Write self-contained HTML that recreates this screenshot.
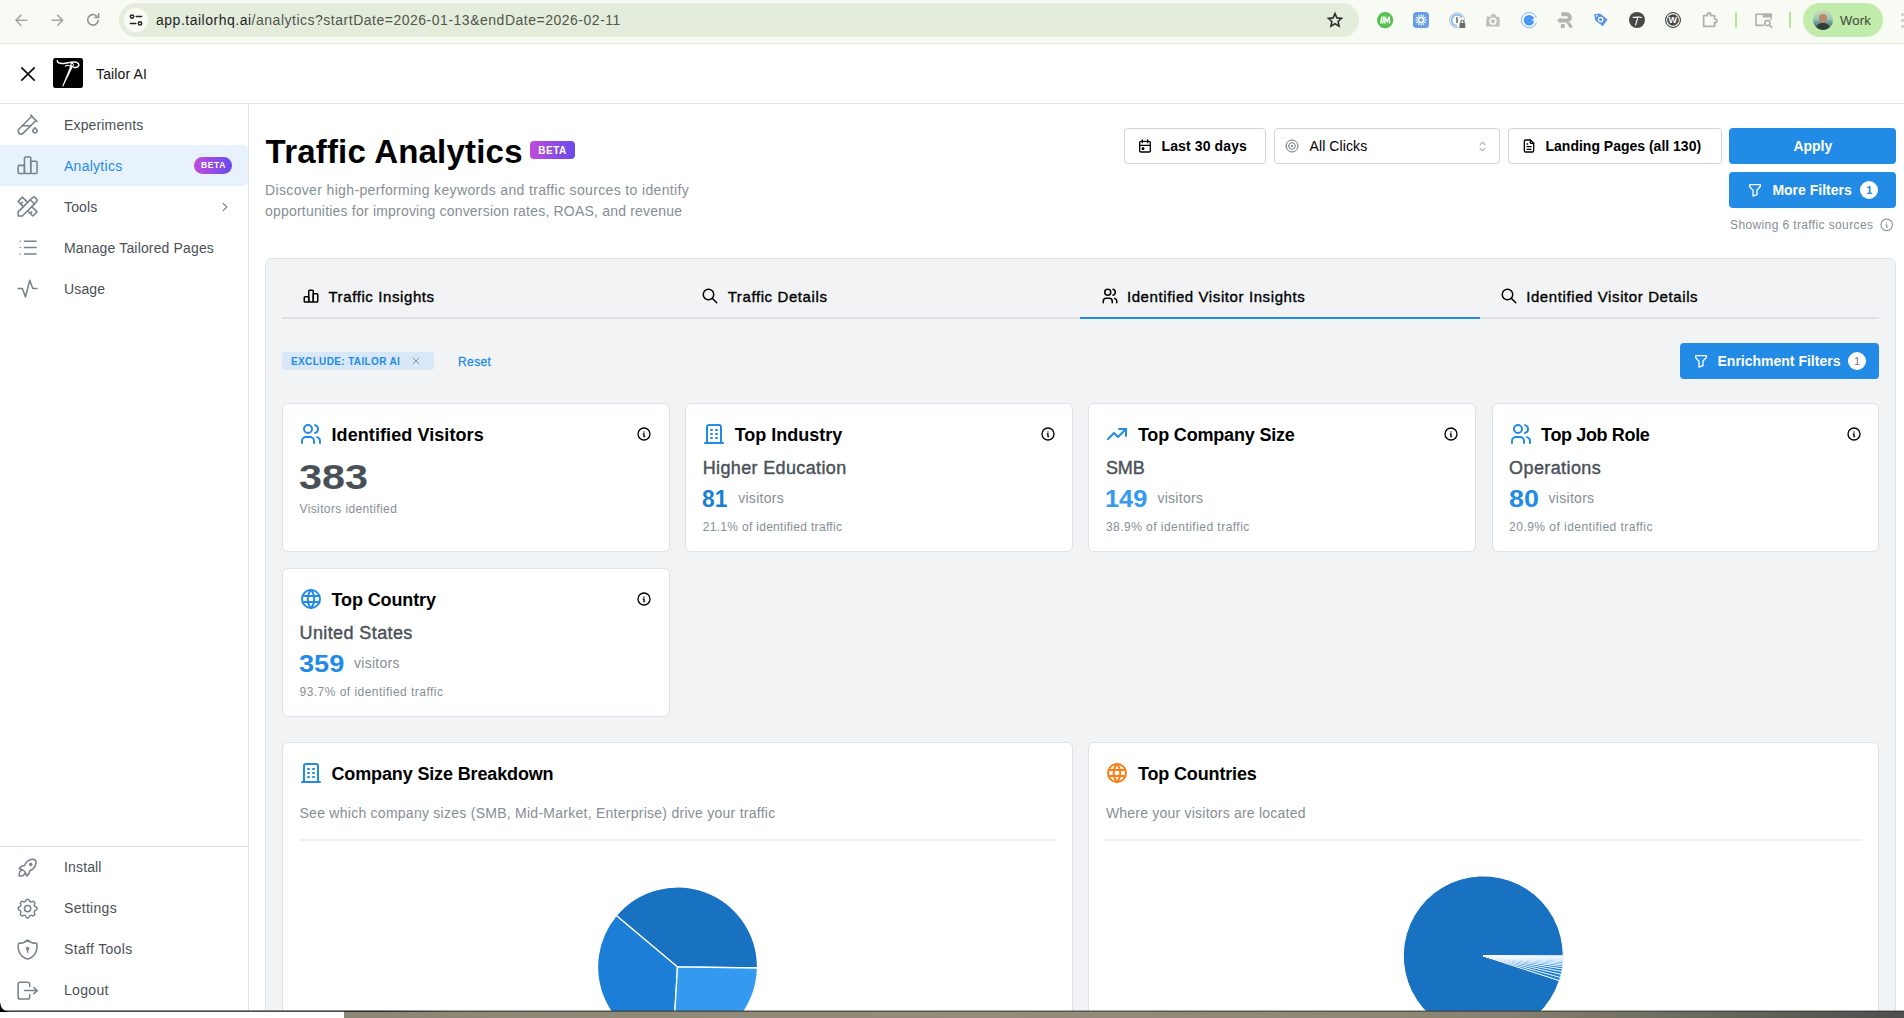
<!DOCTYPE html>
<html lang="en">
<head>
<meta charset="utf-8">
<title>Tailor AI - Traffic Analytics</title>
<style>
*{box-sizing:border-box;margin:0;padding:0}
html,body{width:1904px;height:1018px;overflow:hidden;background:#fff}
body{font-family:"Liberation Sans",sans-serif;color:#000;position:relative;-webkit-font-smoothing:antialiased}
.abs{position:absolute}
svg{display:block;overflow:visible}
.ic{fill:none;stroke:currentColor;stroke-linecap:round;stroke-linejoin:round}
.t{position:absolute;white-space:nowrap;line-height:1}
.med{-webkit-text-stroke:0.3px currentColor}

/* ---------- browser chrome ---------- */
#chrome{left:0;top:0;width:1904px;height:43px;background:#f8fbf3}
#chromeline{left:0;top:43px;width:1904px;height:1px;background:#e2e7db}
#urlbar{left:119px;top:3px;width:1240px;height:34px;border-radius:17px;background:#e4ecdc}
#siteinfo{left:124px;top:8px;width:24px;height:24px;border-radius:12px;background:#f8fbf3}
#url{left:156px;top:13px;font-size:14px;color:#1f241c;letter-spacing:0.51px}
#url span{color:#4f564a}
#profile{left:1803px;top:3px;width:80px;height:34px;border-radius:17px;background:#c1ecab}
#avatar{left:1813px;top:10px;width:20px;height:20px;border-radius:10px;overflow:hidden;background:linear-gradient(180deg,#c9d9b0 0%,#9fc9b8 45%,#6fa3a0 60%,#3f5a4c 100%)}
#work{left:1840px;top:13.5px;font-size:13px;color:#47523f;letter-spacing:0.2px;-webkit-text-stroke:0.15px #47523f}
.sep{width:2px;height:16px;top:12px;background:#b5e39d;border-radius:1px}

/* ---------- app header ---------- */
#apphead{left:0;top:44px;width:1904px;height:59px;background:#fff}
#appheadline{left:0;top:103px;width:1904px;height:1px;background:#dee2e6}
#logo{left:53px;top:58.3px;width:29.9px;height:30px;border-radius:2.5px;background:#000}
#brand{left:96px;top:67px;font-size:14px;color:#111;letter-spacing:0.13px}

/* ---------- sidebar ---------- */
#sidebar{left:0;top:104px;width:248px;height:907px;background:#fff}
#sideline{left:248px;top:104px;width:1px;height:907px;background:#dee2e6}
.nav{position:absolute;left:0;width:248px;height:41px;color:#495057}
.nav svg{position:absolute;left:14.8px;top:8.1px;width:25.2px;height:25.2px;color:#77818c}
.nav .lbl{position:absolute;left:64px;top:13.5px;font-size:14px;line-height:1;white-space:nowrap;letter-spacing:0.15px}
.nav.active{background:#e7f2fd;border-radius:0 5px 5px 0;color:#228be6;height:41px}
#navdiv{left:0;top:846px;width:248px;height:1px;background:#dee2e6}
.beta{background:linear-gradient(90deg,#c04bd9 0%,#6a4cec 100%);color:#fff;font-weight:700;text-align:center;white-space:nowrap}

/* ---------- main ---------- */
#title{left:265.6px;top:134.5px;font-size:33px;font-weight:700;color:#000;letter-spacing:0.2px}
.desc{left:265px;font-size:14px;color:#868e96}
.btn{position:absolute;height:36px;border-radius:4px}
.btn.out{background:#fff;border:1px solid #ced4da}
.btn.fill{background:#228be6}
.btn .t{top:11px;font-size:14px;font-weight:700}
.btn.out .t{top:10px}
.cnt{position:absolute;width:18px;height:18px;border-radius:9px;background:#fff;font-size:11px;font-weight:700;text-align:center;line-height:18px}
#panel{left:265px;top:258px;width:1631px;height:800px;background:#f1f3f5;border:1px solid #dee2e6;border-radius:7px}
#tabline{left:282px;top:317px;width:1597px;height:2px;background:#dee2e6}
#tabact{left:1080px;top:317px;width:400px;height:2px;background:#228be6}
.tab{top:288.6px;font-size:15px;color:#000;letter-spacing:0.6px;-webkit-text-stroke:0.35px #000}
.tabic{position:absolute;top:286.9px;width:18px;height:18px;color:#000}
#chip{left:282px;top:352px;width:152px;height:18px;border-radius:3px;background:#d8e8f8}
#chiptxt{left:291px;top:356.8px;font-size:10px;font-weight:700;color:#228be6;letter-spacing:0.36px}
#reset{left:458px;top:355.7px;font-size:12px;color:#228be6;-webkit-text-stroke:0.3px #228be6;letter-spacing:0.4px}
.card{position:absolute;background:#fff;border:1px solid #dee2e6;border-radius:6px}
.stat{width:387.5px;height:149px}
.stat .hic{position:absolute;left:16px;top:18px;width:24px;height:24px;color:#228be6}
.stat .h{left:48.5px;top:22px;font-size:18px;font-weight:700;color:#000}
.stat .info{position:absolute;left:353.4px;top:22.3px;width:16px;height:16px;color:#000}
.stat .sub{left:16.5px;top:55.4px;font-size:18px;color:#495057;-webkit-text-stroke:0.4px #495057;letter-spacing:0.4px}
.stat .num{left:16px;top:83.4px;font-size:24px;font-weight:700;color:#228be6;transform-origin:0 0}
.stat .vis{top:87.2px;font-size:14px;color:#868e96;letter-spacing:0.28px}
.stat .pct{left:16.5px;top:117px;font-size:12px;color:#868e96;letter-spacing:0.47px}
.chart{width:790.7px;height:300px;top:742px}
.chart .hic{position:absolute;left:16px;top:18px;width:24px;height:24px}
.chart .h{left:48.5px;top:21.5px;font-size:18px;font-weight:700;color:#000;letter-spacing:-0.14px}
.chart .sub{left:16.5px;top:63px;font-size:14px;color:#868e96;letter-spacing:0.26px}
.chart .div{position:absolute;left:16px;right:16px;top:96px;height:2px;background:#eceef1}
</style>
</head>
<body>

<!-- ================= BROWSER CHROME ================= -->
<div id="chrome" class="abs"></div>
<div id="chromeline" class="abs"></div>

<!-- nav arrows -->
<svg class="abs ic" style="left:14.7px;top:13.7px;width:12.6px;height:12.6px;color:#a3a7a0;stroke-width:1.7" viewBox="0 0 14 14"><path d="M13 7H1.5M6.5 1.5L1 7l5.5 5.5"/></svg>
<svg class="abs ic" style="left:50.7px;top:13.7px;width:12.6px;height:12.6px;color:#a3a7a0;stroke-width:1.7" viewBox="0 0 14 14"><path d="M1 7h11.5M7.5 1.5L13 7l-5.5 5.5"/></svg>
<svg class="abs ic" style="left:86px;top:13px;width:14px;height:14px;color:#8f948c;stroke-width:1.6" viewBox="0 0 14 14"><path d="M12.2 7.6A5.3 5.3 0 1 1 10.6 3"/><path d="M12.6 0.8v3.6H9" /></svg>
<div id="urlbar" class="abs"></div>
<div id="siteinfo" class="abs"></div>
<svg class="abs ic" style="left:129px;top:13px;width:14px;height:14px;color:#1f241c;stroke-width:1.5" viewBox="0 0 14 14"><circle cx="3" cy="3.6" r="1.7"/><path d="M7.2 3.6H12.6"/><circle cx="11" cy="10.4" r="1.7"/><path d="M1.4 10.4H6.8"/></svg>
<div id="url" class="t">app.tailorhq.ai<span>/analytics?startDate=2026-01-13&amp;endDate=2026-02-11</span></div>
<!-- star -->
<svg class="abs ic" style="left:1327px;top:12px;width:16px;height:16px;color:#2d3229;stroke-width:1.6;stroke-linejoin:miter" viewBox="0 0 16 16"><path d="M8 1.6l1.9 4.3 4.7.5-3.5 3.1 1 4.6L8 11.7l-4.1 2.4 1-4.6L1.4 6.4l4.7-.5z"/></svg>
<!-- extension icons -->
<svg class="abs" style="left:1376.8px;top:11.8px;width:16.3px;height:16.3px" viewBox="0 0 16.3 16.3"><circle cx="8.15" cy="8.15" r="8.15" fill="#55c150"/><path d="M3 11.600L4.200 4.400h1.100l-.7 7.200zM5 11.600l.9-7.200H7l-.4 7.200zM7 11.600l.4-7.200h1.500l1.200 3.800 1.200-3.800h1.500l.5 7.200h-1.500l-.2-4.200-1 3.200h-1l-.9-3.200-.2 4.200z" fill="#fff"/></svg>
<div class="abs" style="left:1413px;top:11.8px;width:16px;height:16.2px;border-radius:3.5px;background:#699ee6"></div>
<svg class="abs ic" style="left:1415px;top:13.9px;width:12px;height:12px;color:#fff;stroke-width:1.1;stroke-linecap:butt" viewBox="0 0 12 12"><circle cx="6" cy="6" r="2.5" stroke-width="1.5"/><path d="M9.60 6.00L11.60 6.00"/><path d="M9.12 7.80L10.85 8.80"/><path d="M7.80 9.12L8.80 10.85"/><path d="M6.00 9.60L6.00 11.60"/><path d="M4.20 9.12L3.20 10.85"/><path d="M2.88 7.80L1.15 8.80"/><path d="M2.40 6.00L0.40 6.00"/><path d="M2.88 4.20L1.15 3.20"/><path d="M4.20 2.88L3.20 1.15"/><path d="M6.00 2.40L6.00 0.40"/><path d="M7.80 2.88L8.80 1.15"/><path d="M9.12 4.20L10.85 3.20"/></svg>
<svg class="abs" style="left:1449px;top:11.5px;width:18px;height:18px" viewBox="0 0 18 18"><circle cx="8" cy="8.3" r="7.6" fill="#f8fbf3" stroke="#a9aca8" stroke-width=".7"/><path d="M12.9 5.500A5.600 5.600 0 1 0 8 13.900" fill="none" stroke="#7cbcfb" stroke-width="1.700"/><rect x="7.2" y="5.2" width="1.5" height="5.800" fill="#666"/><rect x="10.500" y="11" width="5.800" height="5" rx=".8" fill="#6b6b6b"/><path d="M11.900 11V9.800a1.500 1.500 0 0 1 3 0V11" fill="none" stroke="#6b6b6b" stroke-width="1.100"/></svg>
<svg class="abs" style="left:1486px;top:13.8px;width:14px;height:13px" viewBox="0 0 14 13"><path d="M.6 3.300L2.200 1.500v1.300h2.600L5.300.3h4.200l.5 2.500h3a.6.600 0 0 1 .6.600v8.600a.6.600 0 0 1-.6.600H.6a.6.600 0 0 1-.6-.6z" fill="#bdbfbb"/><circle cx="7" cy="7.200" r="3.700" fill="#f8fbf3"/><circle cx="7" cy="7.200" r="2" fill="#bdbfbb"/></svg>
<svg class="abs" style="left:1521px;top:11.800px;width:16.400px;height:16.400px" viewBox="0 0 16.4 16.4"><path d="M15.300 5.800A7.600 7.600 0 1 0 15.300 10.600" fill="none" stroke="#5a9bff" stroke-width=".8"/><circle cx="8.100" cy="8.200" r="5.300" fill="#4a8df5"/><path d="M10.300 7.400A2.400 2.400 0 1 0 10.300 9" fill="none" stroke="#3fd0f5" stroke-width=".7"/><path d="M10.300 7.500L14 6.600v3.200L10.300 8.900z" fill="#f8fbf3"/><path d="M10.300 7.500L13.600 8.200 10.300 8.900z" fill="#4a8df5"/></svg>
<svg class="abs" style="left:1557.2px;top:11.900px;width:16px;height:16px" viewBox="0 0 16 16"><path d="M4.400 2.300h5.400a3.100 3.100 0 0 1 0 6.200H2.800" fill="none" stroke="#b4b5b1" stroke-width="4"/><path d="M0 8.600l3.400-3.200v6z" fill="#b4b5b1"/><rect x="3.800" y="12" width="4" height="4" fill="#b4b5b1"/><path d="M9.200 10.400h3.800l2.800 4.800-3 .8z" fill="#b4b5b1"/></svg>
<svg class="abs" style="left:1593px;top:12px;width:16px;height:16px" viewBox="0 0 16 16"><path d="M1 2.2L7 1.4l7.6 6.2-4.8 6.6L2.4 8.4z" fill="#5b94e6"/><circle cx="7.6" cy="7.6" r="2.2" fill="none" stroke="#fff" stroke-width="1.2"/><circle cx="3.6" cy="3.8" r=".9" fill="#fff"/></svg>
<div class="abs" style="left:1629px;top:12px;width:16px;height:16px;border-radius:8px;background:#484848"></div>
<svg class="abs ic" style="left:1631px;top:14px;width:12px;height:12px;color:#fff;stroke-width:1.1" viewBox="0 0 12 12"><path d="M2 3.2c3 .9 6-1.2 8.4.2M7 2.8L4.6 11"/></svg>
<div class="abs" style="left:1665px;top:12px;width:16px;height:16px;border-radius:8px;background:#4a4a4a;border:1.5px solid #4a4a4a;box-shadow:inset 0 0 0 1.2px #f8fbf3"></div>
<div class="t" style="left:1668.5px;top:16px;font-size:9px;font-weight:700;color:#fff">W</div>
<svg class="abs ic" style="left:1701px;top:11px;width:17px;height:17px;color:#b0b3ad;stroke-width:1.8" viewBox="0 0 17 17"><path d="M2.600 4.600h3.800V3.700a1.700 1.700 0 0 1 3.400 0v.9h3.800v3.500h.7a1.700 1.700 0 0 1 0 3.400h-.7v3.900h-11z"/></svg>
<div class="abs sep" style="left:1735px"></div>
<svg class="abs ic" style="left:1755px;top:13px;width:18px;height:15px;color:#b0b3ad;stroke-width:1.6" viewBox="0 0 18 15"><path d="M8.5 12.4H1V1.2h15v5"/><path d="M8.5 1.2h7.5v2.6H8.5z" fill="#b0b3ad"/><circle cx="12.4" cy="10" r="2.6"/><path d="M14.4 12l2.4 2.4"/></svg>
<div class="abs sep" style="left:1789px"></div>
<div id="profile" class="abs"></div>
<div id="avatar" class="abs"><div class="abs" style="left:6px;top:4px;width:8px;height:9px;border-radius:4px;background:#b88a6a"></div><div class="abs" style="left:3px;top:13px;width:14px;height:9px;border-radius:6px 6px 0 0;background:#2f3f38"></div></div>
<div id="work" class="t">Work</div>
<div class="abs" style="left:1901.3px;top:13px;width:3px;height:3px;border-radius:2px;background:#c8cbc5"></div>
<div class="abs" style="left:1901.3px;top:19px;width:3px;height:3px;border-radius:2px;background:#c8cbc5"></div>
<div class="abs" style="left:1901.3px;top:25px;width:3px;height:3px;border-radius:2px;background:#c8cbc5"></div>


<!-- ================= APP HEADER ================= -->
<div id="apphead" class="abs"></div>
<div id="appheadline" class="abs"></div>

<svg class="abs ic" style="left:21px;top:67px;width:14px;height:14px;color:#111;stroke-width:1.7" viewBox="0 0 14 14"><path d="M0.8 0.8l12.4 12.4M13.2 0.8L0.8 13.2"/></svg>
<div id="logo" class="abs"></div>
<svg class="abs ic" style="left:53px;top:58.3px;width:30px;height:30px;color:#fff" viewBox="0 0 30 30"><path d="M4.300 2.700C3.900 4.700 6.500 5.700 10.500 5.400C14.500 5.100 18 3.800 22 4.100C25 4.400 26.300 6.200 25.700 7.600C25 9.200 22.500 9.800 20.500 9.300" stroke-width="1.500"/><path d="M18.300 7.800C16.800 8.600 15.200 6.700 13.200 7.400C12.300 7.700 12.200 8.400 12.700 8.300" stroke-width="1.100"/><path d="M17.700 7.200L20.200 8L10 28.700L9.200 28.300Z" fill="#fff" stroke="none"/><ellipse cx="19.100" cy="6.900" rx="1.300" ry="1.500" stroke-width="1" transform="rotate(22 19.1 6.9)"/></svg>
<div id="brand" class="t">Tailor AI</div>


<!-- ================= SIDEBAR ================= -->
<div id="sidebar" class="abs">
<div class="nav" style="top:0px"><svg class="ic" viewBox="0 0 24 24" stroke-width="1.45"><path d="M20 8.04l-12.122 12.124a2.857 2.857 0 1 1 -4.041 -4.04l12.122 -12.124"/><path d="M7 13h8"/><path d="M19 15l1.5 1.6a2 2 0 1 1 -3 0l1.5 -1.6z"/><path d="M15 3l6 6"/></svg><span class="lbl">Experiments</span></div>
<div class="nav active" style="top:41px"><svg class="ic" viewBox="0 0 24 24" stroke-width="1.45"><path d="M3 12.8a1 1 0 0 1 1 -1h4a1 1 0 0 1 1 1v5.700a1 1 0 0 1 -1 1h-4a1 1 0 0 1 -1 -1z"/><path d="M9 4.800a1 1 0 0 1 1 -1h4a1 1 0 0 1 1 1v13.700a1 1 0 0 1 -1 1h-4a1 1 0 0 1 -1 -1z"/><path d="M15 8.800a1 1 0 0 1 1 -1h4a1 1 0 0 1 1 1v9.700a1 1 0 0 1 -1 1h-4a1 1 0 0 1 -1 -1z"/></svg><span class="lbl" style="letter-spacing:0.27px">Analytics</span><span class="beta" style="position:absolute;left:194.3px;top:12.2px;width:37.8px;height:16.4px;border-radius:8.2px;font-size:8.5px;line-height:16.4px;letter-spacing:0.7px;padding-left:0.7px">BETA</span></div>
<div class="nav" style="top:82px"><svg class="ic" viewBox="0 0 24 24" stroke-width="1.45"><path d="M3 21h4l13 -13a1.5 1.5 0 0 0 -4 -4l-13 13v4"/><path d="M14.5 5.5l4 4"/><path d="M12 8l-5 -5l-4 4l5 5"/><path d="M7 8l-1.500 1.500"/><path d="M16 12l5 5l-4 4l-5 -5"/><path d="M16 17l-1.500 1.500"/></svg><span class="lbl">Tools</span><svg class="ic" viewBox="0 0 24 24" stroke-width="1.8" style="left:218px;top:14px;width:14px;height:14px;color:#495057"><path d="M9 6l6 6l-6 6"/></svg></div>
<div class="nav" style="top:123px"><svg class="ic" viewBox="0 0 24 24" stroke-width="1.45"><path d="M9 6h11"/><path d="M9 12h11"/><path d="M9 18h11"/><path d="M5 6v.01"/><path d="M5 12v.01"/><path d="M5 18v.01"/></svg><span class="lbl">Manage Tailored Pages</span></div>
<div class="nav" style="top:164px"><svg class="ic" viewBox="0 0 24 24" stroke-width="1.45"><path d="M3 12h4l3 8l4 -16l3 8h4"/></svg><span class="lbl">Usage</span></div>
<div id="navdiv" class="abs" style="top:742px"></div>
<div class="nav" style="top:743px"><svg class="ic" viewBox="0 0 24 24" stroke-width="1.45"><path d="M4 13a8 8 0 0 1 7 7a6 6 0 0 0 3 -5a9 9 0 0 0 6 -8a3 3 0 0 0 -3 -3a9 9 0 0 0 -8 6a6 6 0 0 0 -5 3"/><path d="M7 14a6 6 0 0 0 -3 6a6 6 0 0 0 6 -3"/><path d="M14 9a1 1 0 1 0 2 0a1 1 0 1 0 -2 0"/></svg><span class="lbl" style="top:13.2px">Install</span></div>
<div class="nav" style="top:784px"><svg class="ic" viewBox="0 0 24 24" stroke-width="1.45"><path d="M10.325 4.317c.426 -1.756 2.924 -1.756 3.35 0a1.724 1.724 0 0 0 2.573 1.066c1.543 -.94 3.31 .826 2.37 2.37a1.724 1.724 0 0 0 1.065 2.572c1.756 .426 1.756 2.924 0 3.35a1.724 1.724 0 0 0 -1.066 2.573c.94 1.543 -.826 3.31 -2.37 2.37a1.724 1.724 0 0 0 -2.572 1.065c-.426 1.756 -2.924 1.756 -3.35 0a1.724 1.724 0 0 0 -2.573 -1.066c-1.543 .94 -3.31 -.826 -2.37 -2.37a1.724 1.724 0 0 0 -1.065 -2.572c-1.756 -.426 -1.756 -2.924 0 -3.35a1.724 1.724 0 0 0 1.066 -2.573c-.94 -1.543 .826 -3.31 2.37 -2.37c1 .608 2.296 .07 2.572 -1.065z"/><path d="M9 12a3 3 0 1 0 6 0a3 3 0 0 0 -6 0"/></svg><span class="lbl" style="top:13.2px;letter-spacing:0.3px">Settings</span></div>
<div class="nav" style="top:825px"><svg class="ic" viewBox="0 0 24 24" stroke-width="1.45"><path d="M12 3a12 12 0 0 0 8.500 3a12 12 0 0 1 -8.500 15a12 12 0 0 1 -8.500 -15a12 12 0 0 0 8.500 -3"/><path d="M11 11a1 1 0 1 0 2 0a1 1 0 1 0 -2 0"/><path d="M12 12v2.500"/></svg><span class="lbl" style="top:13.2px;letter-spacing:0.33px">Staff Tools</span></div>
<div class="nav" style="top:866px"><svg class="ic" viewBox="0 0 24 24" stroke-width="1.45"><path d="M14 8v-2a2 2 0 0 0 -2 -2h-7a2 2 0 0 0 -2 2v12a2 2 0 0 0 2 2h7a2 2 0 0 0 2 -2v-2"/><path d="M9 12h12l-3 -3"/><path d="M18 15l3 -3"/></svg><span class="lbl" style="top:13.2px;letter-spacing:0.32px">Logout</span></div>

</div>
<div id="sideline" class="abs"></div>

<!-- ================= MAIN ================= -->
<div id="title" class="t">Traffic Analytics</div>
<div class="abs beta" style="left:530px;top:141px;width:45px;height:18px;border-radius:4px;font-size:10px;line-height:19.6px;letter-spacing:0.45px">BETA</div>
<div class="t desc" style="top:183px;letter-spacing:0.352px">Discover high-performing keywords and traffic sources to identify</div>
<div class="t desc" style="top:203.5px;letter-spacing:0.2px">opportunities for improving conversion rates, ROAS, and revenue</div>
<div class="btn out" style="left:1124px;top:128px;width:142px"><svg class="ic " viewBox="0 0 24 24" stroke-width="2" style="position:absolute;left:12px;top:9px;width:16px;height:16px;color:#000"><path d="M4 7a2 2 0 0 1 2 -2h12a2 2 0 0 1 2 2v12a2 2 0 0 1 -2 2h-12a2 2 0 0 1 -2 -2z"/><path d="M16 3v4"/><path d="M8 3v4"/><path d="M4 11h16"/><path d="M8 15h2v2h-2z"/></svg><span class="t" style="left:36.5px;color:#000;letter-spacing:0.12px">Last 30 days</span></div>
<div class="btn out" style="left:1274px;top:128px;width:226px"><svg class="ic " viewBox="0 0 24 24" stroke-width="1.5" style="position:absolute;left:9px;top:9px;width:16px;height:16px;color:#6f7a86"><path d="M11 12a1 1 0 1 0 2 0a1 1 0 1 0 -2 0"/><path d="M7 12a5 5 0 1 0 10 0a5 5 0 1 0 -10 0"/><path d="M3 12a9 9 0 1 0 18 0a9 9 0 1 0 -18 0"/></svg><span class="t" style="left:34.5px;color:#000;font-weight:400;letter-spacing:0.1px">All Clicks</span><svg class="ic " viewBox="0 0 24 24" stroke-width="1.5" style="position:absolute;left:200px;top:10px;width:15px;height:15px;color:#6f7a86"><path d="M8 9l4 -4l4 4"/><path d="M16 15l-4 4l-4 -4"/></svg></div>
<div class="btn out" style="left:1508px;top:128px;width:213.5px"><svg class="ic " viewBox="0 0 24 24" stroke-width="2" style="position:absolute;left:12px;top:9px;width:16px;height:16px;color:#000"><path d="M14 3v4a1 1 0 0 0 1 1h4"/><path d="M17 21h-10a2 2 0 0 1 -2 -2v-14a2 2 0 0 1 2 -2h7l5 5v11a2 2 0 0 1 -2 2z"/><path d="M9 9h1"/><path d="M9 13h6"/><path d="M9 17h6"/></svg><span class="t" style="left:36.5px;color:#000">Landing Pages (all 130)</span></div>
<div class="btn fill" style="left:1729.4px;top:128px;width:166.6px"><span class="t" style="left:64px;color:#fff">Apply</span></div>
<div class="btn fill" style="left:1729.4px;top:172px;width:166.6px"><svg class="ic " viewBox="0 0 24 24" stroke-width="2" style="position:absolute;left:18px;top:10px;width:16px;height:16px;color:#fff"><path d="M4 4h16v2.172a2 2 0 0 1 -.586 1.414l-4.414 4.414v7l-6 2v-8.500l-4.480 -4.928a2 2 0 0 1 -.520 -1.345v-2.227z"/></svg><span class="t" style="left:43px;color:#fff">More Filters</span><span class="cnt" style="left:131px;top:9px;color:#228be6">1</span></div>
<div class="t" style="left:1730px;top:219px;font-size:12px;color:#868e96;letter-spacing:0.38px">Showing 6 traffic sources</div>
<svg class="ic " viewBox="0 0 24 24" stroke-width="1.6" style="position:absolute;left:1879.3px;top:217.3px;width:15.4px;height:15.4px;color:#7f8891"><path d="M3 12a9 9 0 1 0 18 0a9 9 0 0 0 -18 0"/><path d="M12 9h.01"/><path d="M11 12h1v4h1"/></svg>
<div id="panel" class="abs"></div>
<div id="tabline" class="abs"></div>
<div id="tabact" class="abs"></div>
<svg class="ic tabic" viewBox="0 0 24 24" stroke-width="2" style="left:302.1px"><path d="M3 14a1 1 0 0 1 1 -1h4a1 1 0 0 1 1 1v5a1 1 0 0 1 -1 1h-4a1 1 0 0 1 -1 -1z"/><path d="M9 5.300a1 1 0 0 1 1 -1h4a1 1 0 0 1 1 1v13.700a1 1 0 0 1 -1 1h-4a1 1 0 0 1 -1 -1z"/><path d="M15 10a1 1 0 0 1 1 -1h4a1 1 0 0 1 1 1v9a1 1 0 0 1 -1 1h-4a1 1 0 0 1 -1 -1z"/></svg><div class="t tab" style="left:328.4px">Traffic Insights</div>
<svg class="ic tabic" viewBox="0 0 24 24" stroke-width="2" style="left:701.25px"><path d="M3 10a7 7 0 1 0 14 0a7 7 0 1 0 -14 0"/><path d="M21 21l-6 -6"/></svg><div class="t tab" style="left:727.65px">Traffic Details</div>
<svg class="ic tabic" viewBox="0 0 24 24" stroke-width="2" style="left:1100.5px"><path d="M5 7a4 4 0 1 0 8 0a4 4 0 1 0 -8 0"/><path d="M3 21v-2a4 4 0 0 1 4 -4h4a4 4 0 0 1 4 4v2"/><path d="M16 3.130a4 4 0 0 1 0 7.750"/><path d="M21 21v-2a4 4 0 0 0 -3 -3.850"/></svg><div class="t tab" style="left:1126.9px">Identified Visitor Insights</div>
<svg class="ic tabic" viewBox="0 0 24 24" stroke-width="2" style="left:1499.75px"><path d="M3 10a7 7 0 1 0 14 0a7 7 0 1 0 -14 0"/><path d="M21 21l-6 -6"/></svg><div class="t tab" style="left:1526.15px">Identified Visitor Details</div>
<div id="chip" class="abs"></div><div id="chiptxt" class="t">EXCLUDE: TAILOR AI</div><svg class="ic " viewBox="0 0 24 24" stroke-width="2" style="position:absolute;left:410.3px;top:355px;width:12px;height:12px;color:#868e96"><path d="M18 6l-12 12"/><path d="M6 6l12 12"/></svg>
<div id="reset" class="t">Reset</div>
<div class="btn fill" style="left:1680px;top:343px;width:199px"><svg class="ic " viewBox="0 0 24 24" stroke-width="2" style="position:absolute;left:13px;top:10px;width:16px;height:16px;color:#fff"><path d="M4 4h16v2.172a2 2 0 0 1 -.586 1.414l-4.414 4.414v7l-6 2v-8.500l-4.480 -4.928a2 2 0 0 1 -.520 -1.345v-2.227z"/></svg><span class="t" style="left:37.5px;color:#fff">Enrichment Filters</span><span class="cnt" style="left:168px;top:9px;color:#6f7a86;font-weight:400">1</span></div>
<div class="card stat" style="left:282px;top:403px"><svg class="ic hic" viewBox="0 0 24 24" stroke-width="2" style=""><path d="M5 7a4 4 0 1 0 8 0a4 4 0 1 0 -8 0"/><path d="M3 21v-2a4 4 0 0 1 4 -4h4a4 4 0 0 1 4 4v2"/><path d="M16 3.130a4 4 0 0 1 0 7.750"/><path d="M21 21v-2a4 4 0 0 0 -3 -3.850"/></svg><span class="t h" style="letter-spacing:0.08px">Identified Visitors</span><svg class="ic info" viewBox="0 0 24 24" stroke-width="2" style=""><path d="M3 12a9 9 0 1 0 18 0a9 9 0 0 0 -18 0"/><path d="M12 9h.01"/><path d="M11 12h1v4h1"/></svg><span class="t" style="left:16px;top:55.2px;font-size:35px;font-weight:700;color:#495057;transform:scaleX(1.18);transform-origin:0 0">383</span><span class="t" style="left:16.5px;top:99px;font-size:12px;color:#868e96;letter-spacing:0.38px">Visitors identified</span></div>
<div class="card stat" style="left:685.2px;top:403px"><svg class="ic hic" viewBox="0 0 24 24" stroke-width="2" style=""><path d="M3 21h18"/><path d="M9 8h1"/><path d="M9 12h1"/><path d="M9 16h1"/><path d="M14 8h1"/><path d="M14 12h1"/><path d="M14 16h1"/><path d="M5 21v-16a2 2 0 0 1 2 -2h10a2 2 0 0 1 2 2v16"/></svg><span class="t h">Top Industry</span><svg class="ic info" viewBox="0 0 24 24" stroke-width="2" style=""><path d="M3 12a9 9 0 1 0 18 0a9 9 0 0 0 -18 0"/><path d="M12 9h.01"/><path d="M11 12h1v4h1"/></svg><span class="t sub" style="letter-spacing:0.36px">Higher Education</span><span class="t num" style="color:#1c7ed6;transform:scaleX(0.95)">81</span><span class="t vis" style="left:52px">visitors</span><span class="t pct" style="letter-spacing:0.31px">21.1% of identified traffic</span></div>
<div class="card stat" style="left:1088.4px;top:403px"><svg class="ic hic" viewBox="0 0 24 24" stroke-width="2" style=""><path d="M3 17l6 -6l4 4l8 -8"/><path d="M14 7h7v7"/></svg><span class="t h" style="letter-spacing:-0.18px">Top Company Size</span><svg class="ic info" viewBox="0 0 24 24" stroke-width="2" style=""><path d="M3 12a9 9 0 1 0 18 0a9 9 0 0 0 -18 0"/><path d="M12 9h.01"/><path d="M11 12h1v4h1"/></svg><span class="t sub" style="letter-spacing:-0.1px">SMB</span><span class="t num" style="color:#339af0;transform:scaleX(1.057)">149</span><span class="t vis" style="left:68px">visitors</span><span class="t pct">38.9% of identified traffic</span></div>
<div class="card stat" style="left:1491.6px;top:403px"><svg class="ic hic" viewBox="0 0 24 24" stroke-width="2" style=""><path d="M5 7a4 4 0 1 0 8 0a4 4 0 1 0 -8 0"/><path d="M3 21v-2a4 4 0 0 1 4 -4h4a4 4 0 0 1 4 4v2"/><path d="M16 3.130a4 4 0 0 1 0 7.750"/><path d="M21 21v-2a4 4 0 0 0 -3 -3.850"/></svg><span class="t h" style="letter-spacing:-0.36px">Top Job Role</span><svg class="ic info" viewBox="0 0 24 24" stroke-width="2" style=""><path d="M3 12a9 9 0 1 0 18 0a9 9 0 0 0 -18 0"/><path d="M12 9h.01"/><path d="M11 12h1v4h1"/></svg><span class="t sub">Operations</span><span class="t num" style="color:#228be6;transform:scaleX(1.116)">80</span><span class="t vis" style="left:56px">visitors</span><span class="t pct">20.9% of identified traffic</span></div>
<div class="card stat" style="left:282px;top:568px"><svg class="ic hic" viewBox="0 0 24 24" stroke-width="2" style=""><path d="M3 12a9 9 0 1 0 18 0a9 9 0 0 0 -18 0"/><path d="M3.600 9h16.800"/><path d="M3.600 15h16.800"/><path d="M11.500 3a17 17 0 0 0 0 18"/><path d="M12.500 3a17 17 0 0 1 0 18"/></svg><span class="t h" style="letter-spacing:-0.12px">Top Country</span><svg class="ic info" viewBox="0 0 24 24" stroke-width="2" style=""><path d="M3 12a9 9 0 1 0 18 0a9 9 0 0 0 -18 0"/><path d="M12 9h.01"/><path d="M11 12h1v4h1"/></svg><span class="t sub">United States</span><span class="t num" style="color:#228be6;transform:scaleX(1.13)">359</span><span class="t vis" style="left:71px">visitors</span><span class="t pct">93.7% of identified traffic</span></div>
<div class="card chart" style="left:282px"><svg class="ic hic" viewBox="0 0 24 24" stroke-width="2" style="color:#228be6"><path d="M3 21h18"/><path d="M9 8h1"/><path d="M9 12h1"/><path d="M9 16h1"/><path d="M14 8h1"/><path d="M14 12h1"/><path d="M14 16h1"/><path d="M5 21v-16a2 2 0 0 1 2 -2h10a2 2 0 0 1 2 2v16"/></svg><span class="t h">Company Size Breakdown</span><span class="t sub">See which company sizes (SMB, Mid-Market, Enterprise) drive your traffic</span><div class="div"></div><svg class="abs" style="left:0;top:0;width:788px;height:300px" viewBox="0 0 788 300"><path d="M394.5 223.9L474.49 225.02A80 80 0 0 0 333.22 172.48Z" fill="#1971c2" stroke="#fff" stroke-width="1.3" stroke-linejoin="round"/><path d="M394.5 223.9L333.22 172.48A80 80 0 0 0 389.76 303.76Z" fill="#1c7ed6" stroke="#fff" stroke-width="1.3" stroke-linejoin="round"/><path d="M394.5 223.9L389.76 303.76A80 80 0 0 0 474.49 225.02Z" fill="#339af0" stroke="#fff" stroke-width="1.3" stroke-linejoin="round"/></svg></div>
<div class="card chart" style="left:1088.4px"><svg class="ic hic" viewBox="0 0 24 24" stroke-width="2" style="color:#fd7e14"><path d="M3 12a9 9 0 1 0 18 0a9 9 0 0 0 -18 0"/><path d="M3.600 9h16.800"/><path d="M3.600 15h16.800"/><path d="M11.500 3a17 17 0 0 0 0 18"/><path d="M12.500 3a17 17 0 0 1 0 18"/></svg><span class="t h">Top Countries</span><span class="t sub" style="letter-spacing:0.22px">Where your visitors are located</span><div class="div"></div><svg class="abs" style="left:0;top:0;width:788px;height:300px" viewBox="0 0 788 300"><path d="M394.3 212.9L474.30 212.90A80 80 0 1 0 470.38 237.62Z" fill="#1971c2" stroke="#fff" stroke-width="1" stroke-linejoin="round"/><path d="M394.3 212.9L470.38 237.62A80 80 0 0 0 471.35 234.41Z" fill="#1c7ed6" stroke="#fff" stroke-width="0.75" stroke-linejoin="round"/><path d="M394.3 212.9L471.35 234.41A80 80 0 0 0 472.15 231.30Z" fill="#1c7ed6" stroke="#fff" stroke-width="0.75" stroke-linejoin="round"/><path d="M394.3 212.9L472.15 231.30A80 80 0 0 0 472.78 228.44Z" fill="#1c7ed6" stroke="#fff" stroke-width="0.75" stroke-linejoin="round"/><path d="M394.3 212.9L472.78 228.44A80 80 0 0 0 473.25 225.83Z" fill="#1c7ed6" stroke="#fff" stroke-width="0.75" stroke-linejoin="round"/><path d="M394.3 212.9L473.25 225.83A80 80 0 0 0 473.58 223.62Z" fill="#1c7ed6" stroke="#fff" stroke-width="0.75" stroke-linejoin="round"/><path d="M394.3 212.9L473.58 223.62A80 80 0 0 0 473.80 221.82Z" fill="#228be6" stroke="#fff" stroke-width="0.75" stroke-linejoin="round"/><path d="M394.3 212.9L473.80 221.82A80 80 0 0 0 473.96 220.29Z" fill="#228be6" stroke="#fff" stroke-width="0.75" stroke-linejoin="round"/><path d="M394.3 212.9L473.96 220.29A80 80 0 0 0 474.07 218.90Z" fill="#228be6" stroke="#fff" stroke-width="0.75" stroke-linejoin="round"/><path d="M394.3 212.9L474.07 218.90A80 80 0 0 0 474.16 217.64Z" fill="#228be6" stroke="#fff" stroke-width="0.75" stroke-linejoin="round"/><path d="M394.3 212.9L474.16 217.64A80 80 0 0 0 474.22 216.53Z" fill="#4dabf7" stroke="#fff" stroke-width="0.75" stroke-linejoin="round"/><path d="M394.3 212.9L474.22 216.53A80 80 0 0 0 474.26 215.55Z" fill="#4dabf7" stroke="#fff" stroke-width="0.75" stroke-linejoin="round"/><path d="M394.3 212.9L474.26 215.55A80 80 0 0 0 474.28 214.71Z" fill="#4dabf7" stroke="#fff" stroke-width="0.75" stroke-linejoin="round"/><path d="M394.3 212.9L474.28 214.71A80 80 0 0 0 474.29 214.02Z" fill="#4dabf7" stroke="#fff" stroke-width="0.75" stroke-linejoin="round"/><path d="M394.3 212.9L474.29 214.02A80 80 0 0 0 474.30 213.46Z" fill="#4dabf7" stroke="#fff" stroke-width="0.75" stroke-linejoin="round"/><path d="M394.3 212.9L474.30 213.46A80 80 0 0 0 474.30 212.90Z" fill="#4dabf7" stroke="#fff" stroke-width="0.75" stroke-linejoin="round"/></svg></div>


<!-- ================= BOTTOM STRIP ================= -->
<div class="abs" style="left:0;top:1011px;width:1904px;height:7px;background:linear-gradient(90deg,#8c8676 18%,#938c7a 52%,#8d8775 73%,#85806f 79%,#6b6a60 89%,#4e4e4c 100%)"></div>
<div class="abs" style="left:0;top:1011px;width:344px;height:7px;background:#fff"></div>
<div class="abs" style="left:0;top:1002.6px;width:9px;height:9px;background:radial-gradient(circle at 9px 0px,rgba(0,0,0,0) 8.2px,#000 9px)"></div>
<div class="abs" style="left:0;top:1010px;width:1904px;height:1px;background:linear-gradient(90deg,rgba(0,0,0,.45) 0%,rgba(0,0,0,.45) 20%,rgba(40,40,36,.4) 24%,rgba(60,60,54,.4) 100%)"></div>
<div class="abs" style="left:0;top:1011px;width:1904px;height:1px;background:linear-gradient(90deg,rgba(0,0,0,.7) 0%,rgba(0,0,0,.7) 20%,rgba(30,30,28,.55) 24%,rgba(40,40,36,.45) 100%)"></div>


</body>
</html>
